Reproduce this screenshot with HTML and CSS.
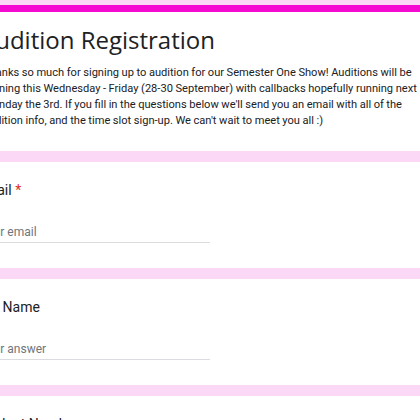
FILE: index.html
```html
<!DOCTYPE html>
<html lang="en">
<head>
    <meta charset="UTF-8">
    <meta name="viewport" content="width=device-width, initial-scale=1.0">
    <title>Audition Registration</title>
    <link rel="stylesheet" href="styles.css">
</head>
<body>
    <div class="form">
        <div class="card header-card">
            <h1>Audition Registration</h1>
            <p class="description">
                Thanks so much for signing up to audition for our Semester One Show! Auditions will be<br>
                running this Wednesday - Friday (28-30 September) with callbacks hopefully running next<br>
                Monday the 3rd. If you fill in the questions below we'll send you an email with all of the<br>
                audition info, and the time slot sign-up. We can't wait to meet you all :)
            </p>
        </div>

        <div class="card question">
            <div class="label">Email <span class="required">*</span></div>
            <div class="input">Your email</div>
        </div>

        <div class="card question">
            <div class="label">Full Name</div>
            <div class="input">Your answer</div>
        </div>

        <div class="card question">
            <div class="label">Student Number</div>
            <div class="input">Your answer</div>
        </div>
    </div>
</body>
</html>
```

FILE: styles.css
```css
body {
    margin: 0;
    background: #fbd9f6;
    font-family: Roboto, 'Liberation Sans', sans-serif;
    color: #202124;
    overflow: hidden;
}

.form {
    width: 520px;
    margin-left: -44px;
    padding-top: 5px;
    display: flex;
    flex-direction: column;
    gap: 11px;
}

.card {
    background: #fff;
    border-radius: 6px;
    padding: 0 24px;
}

.header-card {
    border-top: 7px solid #f60ad2;
    padding-top: 10px;
    padding-bottom: 22px;
}

h1 {
    font-family: 'Open Sans', sans-serif;
    font-weight: 400;
    font-size: 24px;
    line-height: 36px;
    margin: 0 0 7px;
}

.description {
    font-size: 11.1px;
    line-height: 16px;
    word-spacing: -0.2px;
    margin: 0 0 0 3px;
    white-space: nowrap;
}

.question {
    padding-top: 18px;
    padding-bottom: 25px;
}

.label {
    font-size: 14px;
    line-height: 20px;
    margin-left: -3px;
}

.required {
    color: #d93025;
}

.input {
    width: 230px;
    margin-top: 24px;
    font-size: 12px;
    line-height: 16px;
    color: #70757a;
    padding-bottom: 2px;
    border-bottom: 1px solid #dadce0;
}
```
